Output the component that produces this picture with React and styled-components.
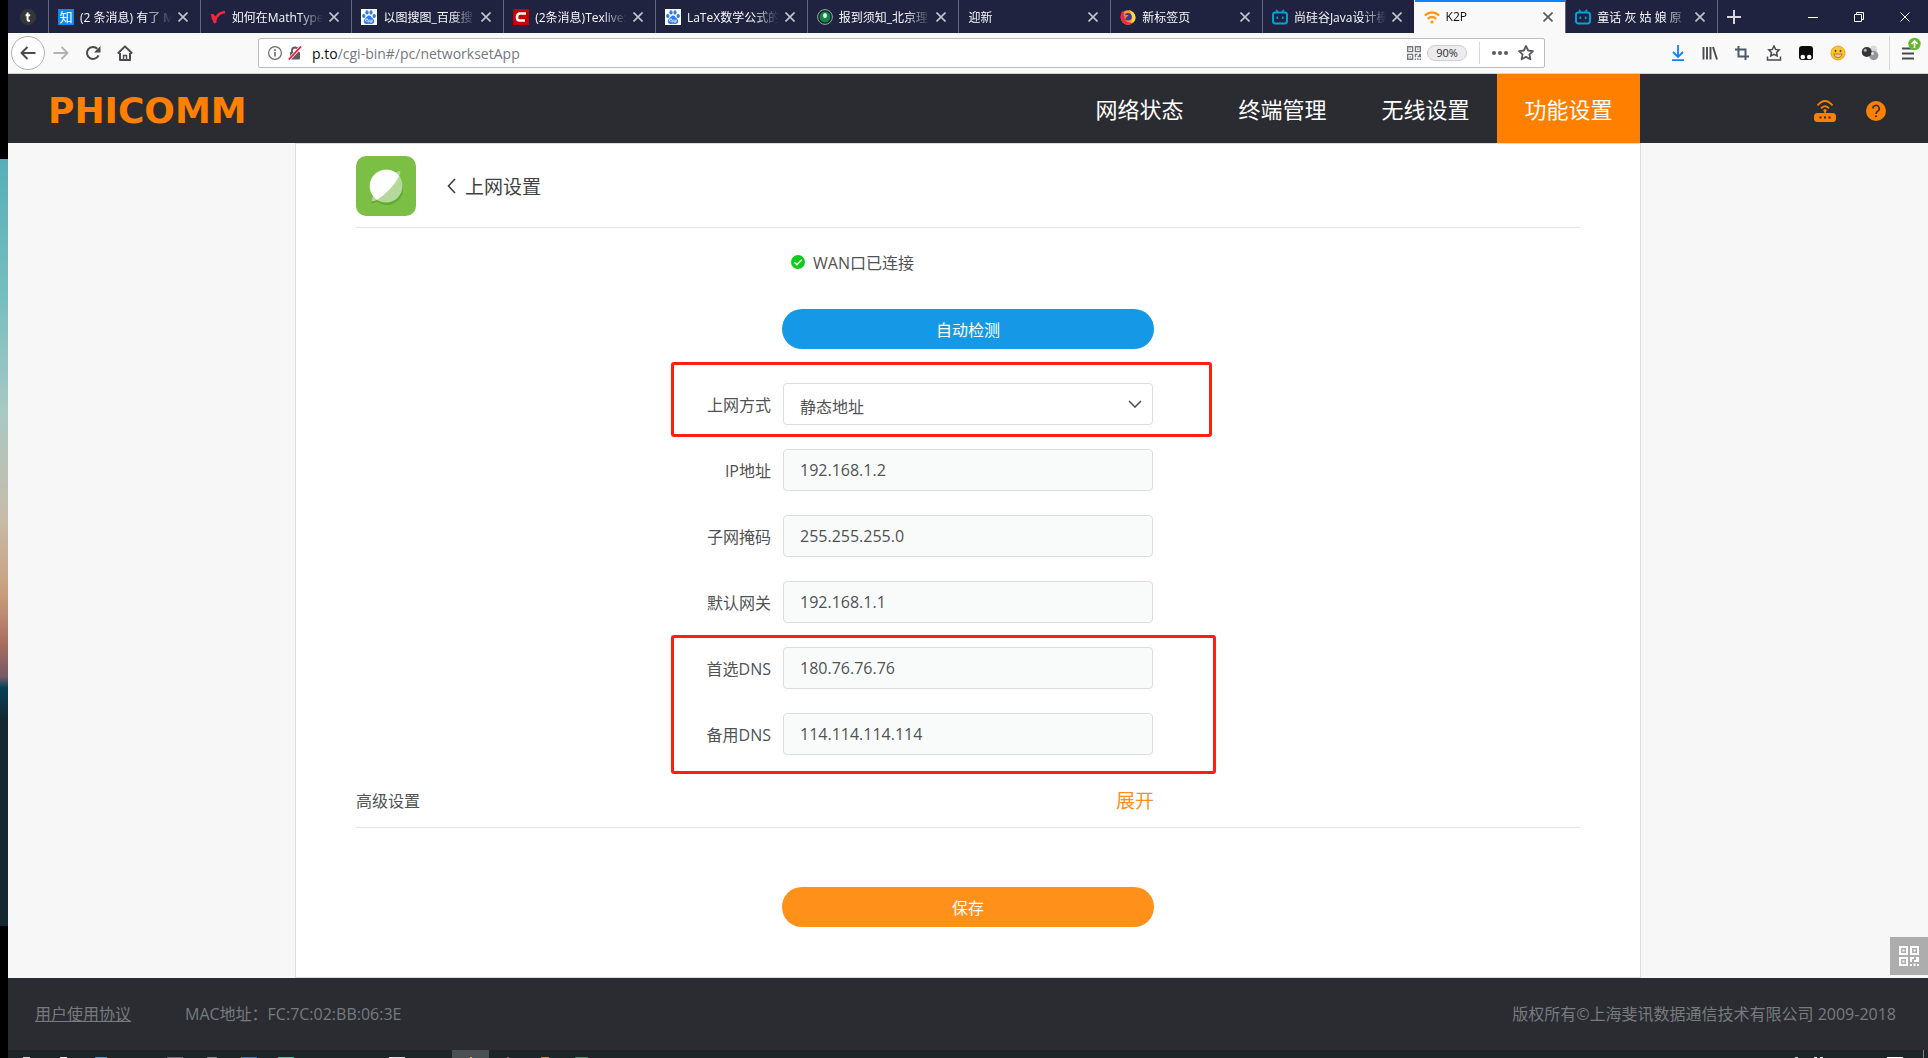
import React, { useState } from 'react';
import styled, { createGlobalStyle } from 'styled-components';

const ORANGE = '#ff8000';

const GlobalStyle = createGlobalStyle`
  * {
    box-sizing: border-box;
  }
  body {
    margin: 0;
    font-family: "Open Sans", "Noto Sans CJK SC", sans-serif;
    font-size: 16px;
    color: #505254;
  }
  button, input, select {
    font: inherit;
    color: inherit;
    margin: 0;
  }
  button {
    border: 0;
    padding: 0;
    background: none;
    cursor: pointer;
  }
  svg {
    display: block;
    flex: none;
  }
`;

/* ---------- favicons ---------- */

const Tumblr = () => (
  <svg width="16" height="16" viewBox="0 0 16 16">
    <circle cx="8" cy="8" r="8" fill="#35363a" />
    <path d="M7.6 3.6v7q0 1.4 2.4 1.2M5.6 6.2h4.6" fill="none" stroke="#fff" strokeWidth="2" />
  </svg>
);

const ZhiMark = styled.span`
  flex: none;
  width: 16px;
  height: 16px;
  background: #0f88eb;
  color: #fff;
  font-size: 13px;
  line-height: 16px;
  text-align: center;
`;

const RedCheck = () => (
  <svg width="16" height="16" viewBox="0 0 16 16">
    <path d="M1 6.500Q4 5.500 5.500 11 7 4 15 3" fill="none" stroke="#f5263a" strokeWidth="2.600" />
    <path d="M2.500 7.500 5.500 14" stroke="#f5263a" strokeWidth="3" />
  </svg>
);

const Paw = () => (
  <svg width="16" height="16" viewBox="0 0 16 16">
    <rect width="16" height="16" fill="#fff" />
    <g fill="#2f7bea">
      <ellipse cx="2.8" cy="7" rx="1.7" ry="2.1" />
      <ellipse cx="6" cy="3.4" rx="1.6" ry="2.2" />
      <ellipse cx="10" cy="3.4" rx="1.6" ry="2.2" />
      <ellipse cx="13.2" cy="7" rx="1.7" ry="2.1" />
      <path d="M8 6.600c2 0 2.600 2 4.200 3.400 2 2 .8 5-1.600 5-1 0-1.600-.3-2.600-.3s-1.600.3-2.600.3c-2.400 0-3.600-3-1.600-5C5.400 8.600 6 6.600 8 6.600z" />
    </g>
    <path d="M5.500 12.500a1.300 1.300 0 1 1 1.600-1v2M9 10.500v2.500h2v-2.500" fill="none" stroke="#fff" strokeWidth=".9" />
  </svg>
);

const CsdnMark = () => (
  <svg width="16" height="16" viewBox="0 0 16 16">
    <rect width="16" height="16" fill="#c90006" />
    <path d="M13 4.500H7Q4.200 4.500 4 8t2.600 3.500H12" fill="none" stroke="#fff" strokeWidth="2.600" />
  </svg>
);

const Seal = () => (
  <svg width="16" height="16" viewBox="0 0 16 16">
    <circle cx="8" cy="8" r="7.400" fill="#0c2f22" stroke="#9aa6ac" />
    <circle cx="8" cy="8" r="5.400" fill="#16834a" />
    <ellipse cx="8" cy="6.500" rx="2" ry="2.600" fill="#d9f2e2" />
  </svg>
);

const Fox = () => (
  <svg width="16" height="16" viewBox="0 0 16 16">
    <circle cx="8" cy="8.500" r="7.300" fill="#ff9a1a" />
    <path d="M1 5Q-.5 12 5 15q5 2 9-2-5 2-8-1T4 4L2 2z" fill="#f0263f" />
    <circle cx="8" cy="7.800" r="3.800" fill="#3336a8" />
    <path d="M9 1q6 2 6.500 7T11 14q2-4 1-7T9 1z" fill="#ffd93b" />
    <path d="M4 6q3-1 5 1-3 0-3 3-2-1-2-4z" fill="#ff7b1c" />
  </svg>
);

const Bili = () => (
  <svg width="16" height="16" viewBox="0 0 16 16" fill="none" stroke="#00a1d6">
    <path d="M4 .8 6 3.200M12 .8 10 3.200" strokeWidth="1.600" />
    <rect x="1" y="3.500" width="14" height="11" rx="2.400" strokeWidth="2" />
    <path d="M5.300 7.500v2.500M10.700 7.500v2.500" strokeWidth="1.600" />
  </svg>
);

const WifiMark = () => (
  <svg width="16" height="16" viewBox="0 0 16 16" fill="none" stroke="#ff9419" strokeWidth="2.200">
    <path d="M.8 6.400q7.200-6 14.400 0M3.800 9.800q4.200-3.600 8.400 0" />
    <circle cx="8" cy="13" r="1.600" fill="#ff9419" stroke="none" />
  </svg>
);

const Cross = ({ size = 10, weight = 1.6 }) => (
  <svg width={size} height={size} viewBox="0 0 10 10" stroke="currentColor" strokeWidth={weight}>
    <path d="M.5.5l9 9M9.500.5l-9 9" />
  </svg>
);

/* ---------- qr pictogram, shared by url bar and side button ---------- */

const QrIcon = ({ size, color = 'currentColor' }) => (
  <svg width={size} height={size} viewBox="0 0 20 20" fill={color}>
    <path
      fillRule="evenodd"
      d="M0 0h9v9H0zM2 2v5h5V2zM11 0h9v9h-9zM13 2v5h5V2zM0 11h9v9H0zM2 13v5h5v-5z"
    />
    <path d="M3.500 3.500h2v2h-2zM14.500 3.500h2v2h-2zM3.500 14.500h2v2h-2zM11 11h4v2h-2v3h-2zM17 11h3v5h-5v-2h2zM11 18h2v2h-2zM14.500 17.500h2V20h-2zM18 18h2v2h-2z" />
  </svg>
);

/* ---------- window shell ---------- */

const Desktop = styled.div`
  min-height: 100vh;
  padding-left: 8px;
  display: flex;
  background: linear-gradient(
    #000 15%, #55afb8 15%, #79bfc0 29%, #a9c9c4 39%, #c8bba9 49%,
    #c99f7c 56%, #a86c5e 61%, #745a68 64%, #064057 65%, #15282f 68%,
    #15282f 87.5%, #000 87.5%
  );
`;

const Window = styled.div`
  flex: 1;
  min-width: 0;
  display: flex;
  flex-direction: column;
`;

const TabStrip = styled.div`
  display: flex;
  height: 33px;
  background: #202340;
  color: #f9f9fa;
  font-size: 12px;
`;

const PinnedTab = styled.button`
  width: 40px;
  display: flex;
  align-items: center;
  justify-content: center;
`;

const Tab = styled.div`
  flex: 1;
  min-width: 0;
  display: flex;
  align-items: center;
  gap: 6px;
  padding: 0 12px 0 9px;
  color: ${(p) => (p.$active ? '#0c0c0d' : '#f9f9fa')};
  background: ${(p) => (p.$active ? '#f9f9fa' : 'none')};
  border-left: 1px solid ${(p) => (p.$active ? '#f9f9fa' : '#646680')};
  box-shadow: ${(p) => (p.$active ? 'inset 0 2px #0a84ff' : 'none')};
`;

const TabTitle = styled.span`
  flex: 1;
  min-width: 0;
  overflow: hidden;
  white-space: nowrap;
  mask-image: linear-gradient(to left, transparent, #000 24px);
`;

const TabClose = styled.button`
  color: ${(p) => (p.$active ? '#55565a' : '#c3c4cd')};
`;

const StripEnd = styled.div`
  width: 211px;
  display: flex;
  justify-content: space-between;
  border-left: 1px solid #646680;
`;

const WindowButtons = styled.div`
  display: flex;
`;

const StripButton = styled.button`
  width: ${(p) => p.$width}px;
  display: flex;
  align-items: center;
  justify-content: center;
`;

const Toolbar = styled.div`
  display: flex;
  align-items: center;
  height: 41px;
  background: #f9f9fa;
  border-bottom: 1px solid #d3d3d5;
  color: #4a4a4f;
`;

const ToolGroup = styled.div`
  display: flex;
  align-items: center;
  padding: ${(p) => p.$pad || 0};
`;

const ToolButton = styled.button`
  width: 32px;
  height: 32px;
  display: flex;
  align-items: center;
  justify-content: center;
  opacity: ${(p) => (p.$dim ? 0.4 : 1)};
`;

const BackButton = styled(ToolButton)`
  width: 34px;
  height: 34px;
  border: 1px solid #b1b1b5;
  border-radius: 50%;
  background: #fff;
`;

const UrlBar = styled.div`
  flex: 1;
  height: 30px;
  display: flex;
  align-items: center;
  gap: 6px;
  padding: 0 6px 0 9px;
  background: #fff;
  border: 1px solid #bdbdc0;
  border-radius: 2px;
`;

const Address = styled.div`
  flex: 1;
  padding-left: 4px;
  font-size: 14px;
  color: #77777b;

  b {
    font-weight: normal;
    color: #0c0c0d;
  }
`;

const Zoom = styled.button`
  width: 40px;
  height: 16px;
  border: 1px solid #cfcfd2;
  border-radius: 8px;
  background: #ececee;
  color: #2a2a2e;
  font-size: 11px;
  line-height: 14px;
`;

const Divider = styled.span`
  width: 1px;
  height: ${(p) => p.$height}px;
  margin: 0 ${(p) => p.$gap}px;
  background: #d7d7db;
`;

/* ---------- router page ---------- */

const Header = styled.header`
  display: flex;
  align-items: stretch;
  height: 69px;
  background: #2b2c31;
`;

const Logo = styled.a`
  align-self: center;
  margin-right: auto;
  padding: 4px 0 0 40px;
  font-family: "DejaVu Sans", sans-serif;
  font-weight: bold;
  font-size: 36px;
  line-height: 1;
  color: ${ORANGE};
  text-decoration: none;
`;

const Nav = styled.nav`
  display: flex;
`;

const NavLink = styled.a`
  width: 143px;
  display: flex;
  align-items: center;
  justify-content: center;
  padding-bottom: 2px;
  font-size: 22px;
  color: #fff;
  text-decoration: none;
  background: ${(p) => (p.$active ? ORANGE : 'none')};
`;

const HeaderTools = styled.div`
  width: 15%;
  display: flex;
  align-items: center;
  justify-content: flex-end;
  gap: 28px;
  padding: 4px 41px 0 0;
`;

const Main = styled.main`
  position: relative;
  flex: 1;
  display: flex;
  justify-content: center;
  background: #f7f7f7;
`;

const Panel = styled.section`
  width: calc(70% + 2px);
  padding: 12px 60px 48px;
  background: #fff;
  border: 1px solid #dcdcdc;
`;

const PanelHead = styled.div`
  display: flex;
  align-items: center;
  padding-bottom: 11px;
  border-bottom: 1px solid #e5e5e5;
`;

const BackLink = styled.a`
  display: flex;
  align-items: center;
  gap: 9px;
  margin-left: 31px;
  font-size: 19px;
  color: #3f4245;
  text-decoration: none;
`;

const Form = styled.form`
  display: flex;
  flex-direction: column;
`;

const Status = styled.div`
  width: 372px;
  align-self: center;
  display: flex;
  align-items: center;
  gap: 7px;
  padding: 0 8px;
  margin: 23px 0 34px;
  line-height: 24px;
`;

const PillButton = styled.button`
  align-self: center;
  width: 372px;
  height: 40px;
  border-radius: 20px;
  color: #fff;
  background: ${(p) => p.$color};
`;

const Fields = styled.div`
  display: flex;
  flex-direction: column;
  gap: 24px;
  padding-top: 34px;
`;

const FieldGroup = styled.div`
  position: relative;
  display: flex;
  flex-direction: column;
  gap: 24px;
`;

const Frame = styled.span`
  position: absolute;
  top: -${(p) => p.$top}px;
  bottom: -${(p) => p.$bottom}px;
  left: calc(50% - 297px);
  width: ${(p) => p.$width}px;
  border: 3px solid #ff1e12;
  border-radius: 3px;
  pointer-events: none;
`;

const Row = styled.div`
  display: grid;
  grid-template-columns: 1fr 370px 1fr;
  column-gap: 12px;
  align-items: center;
`;

const Label = styled.label`
  justify-self: end;
`;

const TextInput = styled.input`
  width: 100%;
  height: 42px;
  padding: 0 16px;
  border: 1px solid #dcdedd;
  border-radius: 4px;
  background: #f9fbfb;
`;

const SelectBox = styled.div`
  display: grid;
  align-items: center;

  > * {
    grid-area: 1 / 1;
  }
  svg {
    justify-self: end;
    margin-right: 11px;
    pointer-events: none;
  }
`;

const Select = styled.select`
  width: 100%;
  height: 42px;
  padding: 5px 16px 0;
  appearance: none;
  border: 1px solid #dcdedd;
  border-radius: 4px;
  background: #fff;
`;

const Advanced = styled.div`
  display: grid;
  grid-template-columns: 1fr 372px 1fr;
  align-items: center;
  padding: 34px 0 14px;
  margin-bottom: 59px;
  line-height: 24px;
  border-bottom: 1px solid #e5e5e5;
`;

const Expand = styled.button`
  justify-self: end;
  font-size: 19px;
  line-height: 24px;
  color: #ff8f1a;
`;

const SideButton = styled.button`
  position: absolute;
  right: 0;
  bottom: 3px;
  width: 38px;
  height: 38px;
  display: flex;
  align-items: center;
  justify-content: center;
  color: #fff;
  background: #adadad;
`;

const Footer = styled.footer`
  display: flex;
  align-items: center;
  gap: 54px;
  height: 72px;
  padding: 0 32px 2px 27px;
  background: #2b2c31;
  color: #767b80;

  a {
    color: inherit;
  }
`;

const Copyright = styled.span`
  margin-left: auto;
`;

/* ---------- taskbar, only its top edge is on screen ---------- */

const Taskbar = styled.div`
  display: flex;
  height: 8px;
  overflow: hidden;
  background: #1e2528;
`;

const TaskSlot = styled.span`
  width: 37px;
  height: 8px;
  display: flex;
  align-items: flex-end;
  justify-content: center;
  background: ${(p) => (p.$active ? '#4b5153' : 'none')};
`;

const TaskIcon = styled.span`
  width: ${(p) => p.$width}px;
  height: 1px;
  margin-right: ${(p) => p.$gap || 0}px;
  background: ${(p) => p.$color};
`;

const Tray = styled.span`
  display: flex;
  align-items: flex-end;
  margin-left: auto;
  padding-right: 4px;
`;

const TrayEdge = styled.span`
  width: 1px;
  height: 8px;
  background: #7d8284;
`;

const tabs = [
  { icon: <ZhiMark>知</ZhiMark>, title: '(2 条消息) 有了 M' },
  { icon: <RedCheck />, title: '如何在MathType' },
  { icon: <Paw />, title: '以图搜图_百度搜' },
  { icon: <CsdnMark />, title: '(2条消息)Texlive:' },
  { icon: <Paw />, title: 'LaTeX数学公式的' },
  { icon: <Seal />, title: '报到须知_北京理' },
  { title: '迎新' },
  { icon: <Fox />, title: '新标签页' },
  { icon: <Bili />, title: '尚硅谷Java设计模' },
  { icon: <WifiMark />, title: 'K2P', active: true },
  { icon: <Bili />, title: '童话 灰 姑 娘 原' },
];

const navItems = ['网络状态', '终端管理', '无线设置', '功能设置'];

const taskIcons = [
  [7, '#d8d8d8'], [7, '#e8e8e8'], [12, '#4a9fe8'], [0], [16, '#6b6b74'], [10, '#8b8b8e'],
  [16, '#2b78e4'], [16, '#2fd09a'], [0], [0], [16, '#dcdcdc'], [0], [2, '#d9a24a', true],
  [2, '#a06a78'], [8, '#e87a5a'], [13, '#2f9a6a'],
];

function Field({ id, label, value }) {
  const [text, setText] = useState(value);
  return (
    <Row>
      <Label htmlFor={id}>{label}</Label>
      <TextInput id={id} type="text" value={text} onChange={(e) => setText(e.target.value)} />
    </Row>
  );
}

function Tabs() {
  return (
    <TabStrip>
      <PinnedTab aria-label="tumblr"><Tumblr /></PinnedTab>
      {tabs.map((tab, i) => (
        <Tab key={i} $active={tab.active}>
          {tab.icon}
          <TabTitle>{tab.title}</TabTitle>
          <TabClose $active={tab.active} aria-label="关闭"><Cross /></TabClose>
        </Tab>
      ))}
      <StripEnd>
        <StripButton $width={32} aria-label="新标签页">
          <svg width="14" height="14" viewBox="0 0 14 14" stroke="#d5d6dd" strokeWidth="2">
            <path d="M7 0v14M0 7h14" />
          </svg>
        </StripButton>
        <WindowButtons>
          <StripButton $width={46} aria-label="最小化">
            <svg width="10" height="10" viewBox="0 0 10 10" stroke="#fff"><path d="M0 5.500h10" /></svg>
          </StripButton>
          <StripButton $width={46} aria-label="还原">
            <svg width="10" height="10" viewBox="0 0 10 10" fill="none" stroke="#fff">
              <path d="M.5 2.500h7v7h-7zM2.500 2.500v-2h7v7h-2" />
            </svg>
          </StripButton>
          <StripButton $width={46} aria-label="关闭窗口"><Cross weight={1} /></StripButton>
        </WindowButtons>
      </StripEnd>
    </TabStrip>
  );
}

function BrowserBar() {
  return (
    <Toolbar>
      <ToolGroup $pad="0 117px 0 3px">
        <BackButton aria-label="后退">
          <svg width="16" height="16" viewBox="0 0 16 16" fill="none" stroke="currentColor" strokeWidth="2">
            <path d="M15.500 8H1.500M7.500 2l-6 6 6 6" strokeLinejoin="round" />
          </svg>
        </BackButton>
        <ToolButton $dim aria-label="前进">
          <svg width="16" height="16" viewBox="0 0 16 16" fill="none" stroke="currentColor" strokeWidth="1.800">
            <path d="M.5 8h14M8.500 2l6 6-6 6" strokeLinejoin="round" />
          </svg>
        </ToolButton>
        <ToolButton aria-label="刷新">
          <svg width="16" height="16" viewBox="0 0 16 16" fill="none" stroke="currentColor" strokeWidth="2">
            <path d="M13.500 10.300A6 6 0 1 1 12.300 3.800" />
            <path d="M15.500 1v6.500H9z" fill="currentColor" stroke="none" />
          </svg>
        </ToolButton>
        <ToolButton aria-label="主页">
          <svg width="16" height="16" viewBox="0 0 16 16" fill="none" stroke="currentColor" strokeWidth="2">
            <path d="M.8 8.500 8 1.400l7.200 7.100M3 8v7h10V8" strokeLinejoin="round" />
            <path d="M6.500 15v-4.500h3V15" strokeWidth="1.400" />
          </svg>
        </ToolButton>
      </ToolGroup>

      <UrlBar>
        <svg width="14" height="14" viewBox="0 0 14 14" fill="none" stroke="#69696d">
          <circle cx="7" cy="7" r="6.400" strokeWidth="1.200" />
          <path d="M7 6v4.500M7 3.300V5" strokeWidth="1.600" />
        </svg>
        <svg width="14" height="14" viewBox="0 0 14 14">
          <path d="M4 7V4.500a3 3 0 0 1 6 0V7" fill="none" stroke="#5d5d61" strokeWidth="1.800" />
          <rect x="2" y="6" width="10" height="7.500" rx="1" fill="#5d5d61" />
          <path d="M1 13.500 13 .5" stroke="#fff" strokeWidth="3.200" />
          <path d="M.8 13.500 13 .5" stroke="#ff0f3d" strokeWidth="1.800" />
        </svg>
        <Address><b>p.to</b>/cgi-bin#/pc/networksetApp</Address>
        <QrIcon size={14} color="#75797f" />
        <Zoom>90%</Zoom>
        <Divider $height={22} $gap={6} />
        <svg width="16" height="16" viewBox="0 0 16 16" fill="#5a5a5e">
          <circle cx="2" cy="8" r="2" />
          <circle cx="8" cy="8" r="2" />
          <circle cx="14" cy="8" r="2" />
        </svg>
        <svg width="24" height="16" viewBox="-4 0 24 16" fill="none" stroke="#5a5a5e" strokeWidth="1.800">
          <path d="M8 1l2.100 4.500 4.900.6-3.600 3.300 1 4.900L8 11.900l-4.400 2.400 1-4.900L1 6.100l4.900-.6z" strokeLinejoin="round" />
        </svg>
      </UrlBar>

      <ToolGroup $pad="0 3px 0 117px">
        <ToolButton aria-label="下载">
          <svg width="16" height="16" viewBox="0 0 16 16" fill="none" stroke="#0a84ff" strokeWidth="1.800">
            <path d="M8 0v11.500M3 7l5 5 5-5M2 15.100h12" />
          </svg>
        </ToolButton>
        <ToolButton aria-label="书库">
          <svg width="16" height="16" viewBox="0 0 16 16" stroke="currentColor" strokeWidth="1.900">
            <path d="M1.500 2v12.500M5 2v12.500M8.500 2v12.500M11 2l4 12.500" />
          </svg>
        </ToolButton>
        <ToolButton aria-label="截图">
          <svg width="16" height="16" viewBox="0 0 16 16" fill="none" stroke="#4d5a68" strokeWidth="2">
            <path d="M4.500 1v10.500H15M1 4.500h10.500V15" />
          </svg>
        </ToolButton>
        <ToolButton aria-label="书签">
          <svg width="16" height="16" viewBox="0 0 16 16" fill="none" stroke="currentColor" strokeWidth="1.500">
            <path d="M8 1l1.600 3.400 3.600.5-2.600 2.500.6 3.600L8 9.300 4.800 11l.6-3.600-2.600-2.500 3.600-.5z" />
            <path d="M1.500 11.500V15h13v-3.500" />
          </svg>
        </ToolButton>
        <ToolButton aria-label="脚本管理">
          <svg width="16" height="16" viewBox="0 0 16 16">
            <rect x="1" y="1" width="14" height="14" rx="3" fill="#0b0b0b" />
            <circle cx="4.800" cy="12" r="2.300" fill="#fff" />
            <circle cx="11.200" cy="12" r="2.300" fill="#fff" />
          </svg>
        </ToolButton>
        <ToolButton aria-label="表情">
          <svg width="16" height="16" viewBox="0 0 16 16">
            <circle cx="8" cy="8" r="7" fill="#fcc62f" stroke="#eea023" />
            <ellipse cx="5.500" cy="6" rx=".9" ry="1.300" fill="#6b4212" />
            <ellipse cx="10.500" cy="6" rx=".9" ry="1.300" fill="#6b4212" />
            <path d="M3.800 9h8.400q-.6 3.800-4.200 3.800T3.800 9z" fill="#e8c9a0" stroke="#a06a1c" strokeWidth=".8" />
          </svg>
        </ToolButton>
        <ToolButton aria-label="代理">
          <svg width="18" height="16" viewBox="0 0 18 16">
            <circle cx="12.500" cy="4" r="3.500" fill="#d9d9d9" />
            <circle cx="12.700" cy="10.500" r="4.700" fill="#96969a" />
            <circle cx="5.800" cy="7" r="5" fill="#353538" />
            <circle cx="4.300" cy="5.300" r="1.500" fill="#b5b5b8" />
            <circle cx="11.500" cy="8.500" r="1.500" fill="#e3e3e5" />
          </svg>
        </ToolButton>
        <Divider $height={34} $gap={3} />
        <ToolButton aria-label="菜单">
          <svg width="24" height="32" viewBox="0 0 24 32">
            <path d="M5 11.500h12M5 16.500h12M5 21.500h12" stroke="#4a4a4f" strokeWidth="2" />
            <circle cx="17.500" cy="7" r="6.200" fill="#63b82f" />
            <path d="M17.500 11V4.500M14.500 7l3-3 3 3" fill="none" stroke="#fff" strokeWidth="1.600" />
          </svg>
        </ToolButton>
      </ToolGroup>
    </Toolbar>
  );
}

function PageHeader() {
  return (
    <Header>
      <Logo href="#/">PHICOMM</Logo>
      <Nav>
        {navItems.map((item) => (
          <NavLink key={item} href="#/pc" $active={item === '功能设置'}>{item}</NavLink>
        ))}
      </Nav>
      <HeaderTools>
        <button aria-label="路由器">
          <svg width="24" height="24" viewBox="0 0 24 24" fill="none" stroke={ORANGE}>
            <path d="M4.500 6.500q7.500-9 15 0M8 9.300q4-4.500 8 0" strokeWidth="1.800" />
            <circle cx="12" cy="11.500" r="1.600" fill={ORANGE} stroke="none" />
            <path d="M12 11v4" strokeWidth="1.600" />
            <rect x="1" y="14" width="22" height="9" rx="3.500" fill={ORANGE} stroke="none" />
            <path d="M6.500 18.500h2M11 18.500h2M15.500 18.500h2" stroke="#2b2c31" strokeWidth="2" />
          </svg>
        </button>
        <button aria-label="帮助">
          <svg width="22" height="22" viewBox="0 0 22 22">
            <circle cx="11" cy="11" r="10" fill={ORANGE} />
            <path d="M7.800 8.600a3.200 3.200 0 1 1 4.700 2.800q-1.500.8-1.500 2.600" fill="none" stroke="#2b2c31" strokeWidth="1.500" />
            <circle cx="11" cy="16.300" r="1" fill="#2b2c31" />
          </svg>
        </button>
      </HeaderTools>
    </Header>
  );
}

function App() {
  const [mode, setMode] = useState('static');

  return (
    <Desktop>
      <GlobalStyle />
      <Window>
        <Tabs />
        <BrowserBar />
        <PageHeader />

        <Main>
          <Panel>
            <PanelHead>
              <svg width="60" height="60" viewBox="0 0 60 60">
                <rect width="60" height="60" rx="10" fill="#7bbf45" />
                <ellipse cx="31" cy="33" rx="16" ry="16" fill="#62a938" />
                <path d="M16 43.500l-1 4q7-1 12-5z" fill="#62a938" />
                <circle cx="30" cy="30" r="16.500" fill="#b4d99a" />
                <path d="M39 16.500l5.500-1.500q-.5 4-2.500 7zM17 40l-1.500 5.500q4-.5 6.500-2z" fill="#b4d99a" />
                <path d="M21 43.800A16.500 16.500 0 1 1 43.300 20Q36 34 21 43.800z" fill="#fff" />
              </svg>
              <BackLink href="#/pc/home">
                <svg width="9" height="16" viewBox="0 0 9 16" fill="none" stroke="#3f4245" strokeWidth="1.600">
                  <path d="M8 1 1.500 8 8 15" />
                </svg>
                上网设置
              </BackLink>
            </PanelHead>

            <Form onSubmit={(e) => e.preventDefault()}>
              <Status>
                <svg width="16" height="16" viewBox="0 0 16 16">
                  <circle cx="8" cy="7" r="7" fill="#0fcb1b" />
                  <path d="M4.300 7.200l2.600 2.600 4.800-5" fill="none" stroke="#fff" strokeWidth="1.500" />
                </svg>
                WAN口已连接
              </Status>
              <PillButton type="button" $color="#1599e7">自动检测</PillButton>

              <Fields>
                <FieldGroup>
                  <Row>
                    <Label htmlFor="mode">上网方式</Label>
                    <SelectBox>
                      <Select id="mode" value={mode} onChange={(e) => setMode(e.target.value)}>
                        <option value="static">静态地址</option>
                        <option value="dhcp">自动获取</option>
                        <option value="pppoe">宽带拨号</option>
                      </Select>
                      <svg width="14" height="8" viewBox="0 0 14 8" fill="none" stroke="#505254" strokeWidth="1.600">
                        <path d="M1 1l6 6 6-6" />
                      </svg>
                    </SelectBox>
                  </Row>
                  <Frame $top={21} $bottom={12} $width={541} />
                </FieldGroup>
                <Field id="ip" label="IP地址" value="192.168.1.2" />
                <Field id="mask" label="子网掩码" value="255.255.255.0" />
                <Field id="gateway" label="默认网关" value="192.168.1.1" />
                <FieldGroup>
                  <Field id="dns1" label="首选DNS" value="180.76.76.76" />
                  <Field id="dns2" label="备用DNS" value="114.114.114.114" />
                  <Frame $top={12} $bottom={19} $width={545} />
                </FieldGroup>
              </Fields>

              <Advanced>
                <span>高级设置</span>
                <Expand type="button">展开</Expand>
              </Advanced>
              <PillButton type="submit" $color="#ff901a">保存</PillButton>
            </Form>
          </Panel>
          <SideButton aria-label="二维码"><QrIcon size={20} /></SideButton>
        </Main>

        <Footer>
          <a href="#/agreement">用户使用协议</a>
          <span>MAC地址：FC:7C:02:BB:06:3E</span>
          <Copyright>版权所有©上海斐讯数据通信技术有限公司 2009-2018</Copyright>
        </Footer>

        <Taskbar>
          {taskIcons.map(([width, color, active], i) => (
            <TaskSlot key={i} $active={active}>
              <TaskIcon $width={width} $color={color} />
            </TaskSlot>
          ))}
          <Tray>
            <TaskIcon $width={3} $gap={16} $color="#c8caca" />
            <TaskIcon $width={3} $gap={3} $color="#e4e4e4" />
            <TaskIcon $width={3} $gap={64} $color="#e4e4e4" />
            <TaskIcon $width={16} $gap={20} $color="#fff" />
            <TrayEdge />
          </Tray>
        </Taskbar>
      </Window>
    </Desktop>
  );
}

export default App;
